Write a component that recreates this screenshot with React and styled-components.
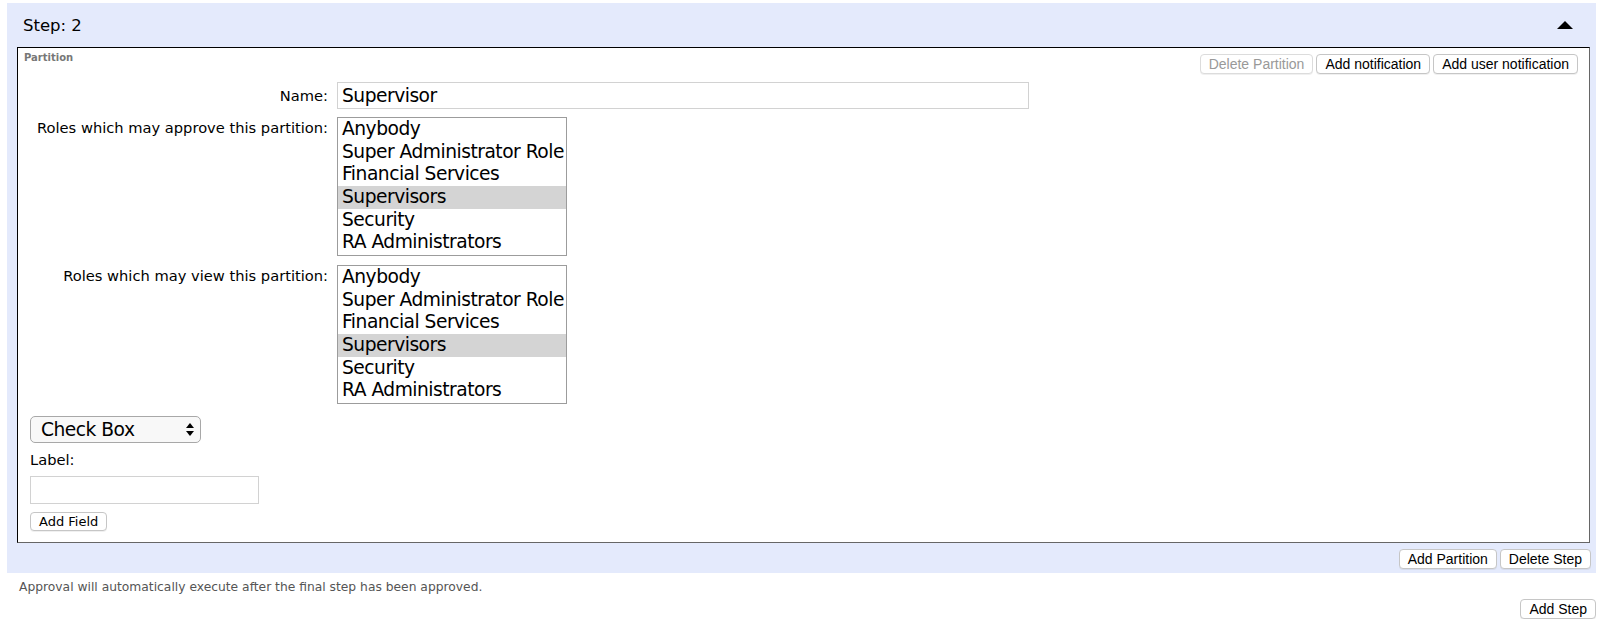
import React from 'react';
import styled, { createGlobalStyle } from 'styled-components';

const GlobalStyle = createGlobalStyle`
  body {
    margin: 0;
    background: #fff;
    font-family: "DejaVu Sans", Verdana, sans-serif;
    color: #000;
  }
`;

const roles = [
  'Anybody',
  'Super Administrator Role',
  'Financial Services',
  'Supervisors',
  'Security',
  'RA Administrators',
];

const Page = styled.div`
  width: 1589px;
  padding: 3px 0 0 7px;
`;

const Panel = styled.div`
  background: #e4eafc;
  padding: 0 5px 4px 10px;
`;

const Header = styled.div`
  height: 44px;
  display: flex;
  align-items: center;
  justify-content: space-between;
  padding-left: 6px;
  font-size: 16.5px;
`;

const Caret = styled.span`
  width: 0;
  height: 0;
  margin-right: 18px;
  border-left: 8px solid transparent;
  border-right: 8px solid transparent;
  border-bottom: 8px solid #000;
`;

const Box = styled.div`
  background: #fff;
  border: 1px solid;
  border-color: #000 #666 #666 #000;
  margin-right: 1px;
`;

const TopRow = styled.div`
  display: flex;
  justify-content: space-between;
  align-items: flex-start;
  height: 20px;
  padding: 6px 11px 0 6px;
`;

const Legend = styled.span`
  margin-top: -2px;
  font-size: 10px;
  line-height: 12px;
  font-weight: bold;
  color: #777;
`;

const ButtonGroup = styled.div`
  display: flex;
  gap: 3px;
`;

const Button = styled.button`
  height: ${(p) => p.$h || 20}px;
  padding: 0 8px;
  background: #fff;
  border: 1px solid ${(p) => (p.disabled ? '#dcdcdc' : '#c6c6c6')};
  border-radius: 4px;
  box-shadow: 0 1px 0 rgba(0, 0, 0, 0.06);
  font-family: "Liberation Sans", Arial, sans-serif;
  font-size: 14px;
  color: ${(p) => (p.disabled ? '#999' : '#000')};
  white-space: nowrap;
`;

const FormGrid = styled.div`
  display: grid;
  grid-template-columns: 310px 1fr;
  column-gap: 9px;
  row-gap: 8px;
  margin-top: 8px;
`;

const FieldLabel = styled.div`
  text-align: right;
  font-size: 14.67px;
  line-height: 17px;
  padding-top: ${(p) => p.$offset || 0}px;
`;

const TextInput = styled.input`
  box-sizing: border-box;
  width: ${(p) => p.$w}px;
  height: ${(p) => p.$h}px;
  border: 1px solid #d2d2d2;
  padding: 0 4px;
  font-family: "DejaVu Sans", Verdana, sans-serif;
  font-size: 18.67px;
  letter-spacing: -0.5px;
  color: #000;
  outline: none;
`;

const ListBox = styled.ul`
  box-sizing: border-box;
  width: 230px;
  height: 139px;
  margin: ${(p) => p.$top || 0}px 0 0 0;
  padding: 0;
  list-style: none;
  border: 1px solid #9c9c9c;
  overflow: hidden;
`;

const Option = styled.li`
  height: 22.67px;
  line-height: 22.67px;
  padding-left: 4px;
  font-size: 18.67px;
  letter-spacing: -0.5px;
  white-space: nowrap;
  background: ${(p) => (p.$selected ? '#d4d4d4' : 'transparent')};
`;

const Lower = styled.div`
  display: flex;
  flex-direction: column;
  align-items: flex-start;
  padding: 12px 0 11px 12px;
`;

const FakeSelect = styled.div`
  box-sizing: border-box;
  width: 171px;
  height: 27px;
  display: flex;
  align-items: center;
  justify-content: space-between;
  padding: 0 6px 0 10px;
  border: 1px solid #a8a8a8;
  border-radius: 5px;
  background: #f8f8f8;
  font-size: 18.67px;
  letter-spacing: -0.5px;
`;

const SmallLabel = styled.div`
  margin: 8px 0 8px;
  font-size: 14.67px;
  line-height: 17px;
`;

const AddFieldButton = styled(Button)`
  margin-top: 8px;
  font-family: "DejaVu Sans", Verdana, sans-serif;
  font-size: 13px;
`;

const Footer = styled.div`
  display: flex;
  justify-content: flex-end;
  gap: 3px;
  padding-top: 6px;
`;

const Note = styled.p`
  margin: 7px 0 0;
  padding-left: 12px;
  font-size: 12.3px;
  line-height: 14px;
  color: #555;
`;

const BottomRow = styled.div`
  display: flex;
  justify-content: flex-end;
  margin-top: 5px;
`;

const RoleList = ({ top }) => (
  <ListBox $top={top} role="listbox" aria-multiselectable="true">
    {roles.map((r) => (
      <Option key={r} $selected={r === 'Supervisors'}>
        {r}
      </Option>
    ))}
  </ListBox>
);

const SelectArrows = () => (
  <svg width="8" height="13" viewBox="0 0 8 13">
    <path d="M4 0 L8 5 L0 5 Z" fill="#000" />
    <path d="M4 13 L8 8 L0 8 Z" fill="#000" />
  </svg>
);

const App = () => (
  <>
    <GlobalStyle />
    <Page>
      <Panel>
        <Header>
          <span>Step: 2</span>
          <Caret />
        </Header>
        <Box>
          <TopRow>
            <Legend>Partition</Legend>
            <ButtonGroup>
              <Button disabled>Delete Partition</Button>
              <Button>Add notification</Button>
              <Button>Add user notification</Button>
            </ButtonGroup>
          </TopRow>
          <FormGrid>
            <FieldLabel $offset={5}>Name:</FieldLabel>
            <div>
              <TextInput $w={692} $h={27} defaultValue="Supervisor" />
            </div>
            <FieldLabel $offset={2}>Roles which may approve this partition:</FieldLabel>
            <RoleList />
            <FieldLabel $offset={3}>Roles which may view this partition:</FieldLabel>
            <RoleList top={1} />
          </FormGrid>
          <Lower>
            <FakeSelect role="combobox">
              <span>Check Box</span>
              <SelectArrows />
            </FakeSelect>
            <SmallLabel>Label:</SmallLabel>
            <TextInput $w={229} $h={28} />
            <AddFieldButton $h={19}>Add Field</AddFieldButton>
          </Lower>
        </Box>
        <Footer>
          <Button>Add Partition</Button>
          <Button>Delete Step</Button>
        </Footer>
      </Panel>
      <Note>Approval will automatically execute after the final step has been approved.</Note>
      <BottomRow>
        <Button>Add Step</Button>
      </BottomRow>
    </Page>
  </>
);

export default App;
